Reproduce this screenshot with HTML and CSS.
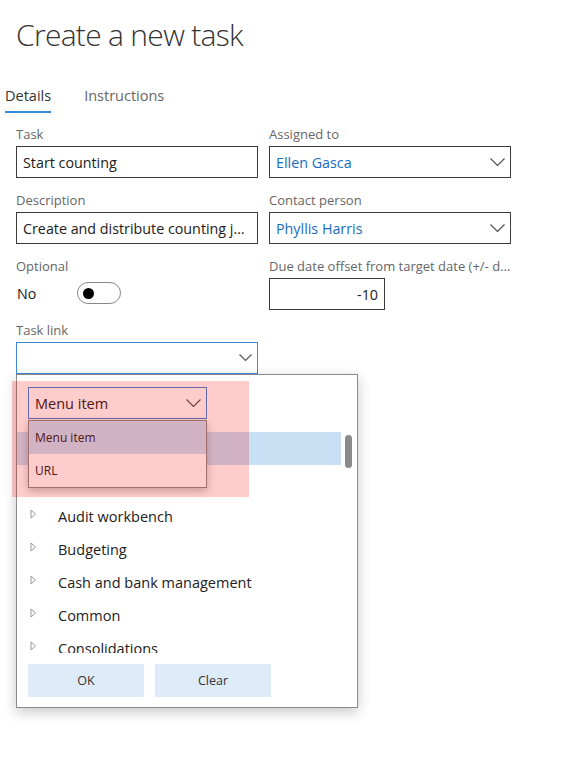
FILE: index.html
```html
<!DOCTYPE html>
<html lang="en">
<head>
  <meta charset="UTF-8">
  <title>Create a new task</title>
  <link rel="stylesheet" href="styles.css">
</head>
<body>

<h1 class="page-title">Create a new task</h1>

<div class="tabs">
  <div class="tab active">Details</div>
  <div class="tab">Instructions</div>
</div>

<div class="form">
  <div class="col">
    <div class="field">
      <div class="label">Task</div>
      <div class="control"><span class="value">Start counting</span></div>
    </div>
    <div class="field">
      <div class="label">Description</div>
      <div class="control"><span class="value">Create and distribute counting journals</span></div>
    </div>
    <div class="field">
      <div class="label">Optional</div>
      <div class="toggle-row">
        <span class="toggle-text">No</span>
        <span class="toggle"><span class="knob"></span></span>
      </div>
    </div>
    <div class="field tasklink">
      <div class="label">Task link</div>
      <div class="control select focused">
        <span class="value"></span>
        <svg class="chevron" width="13" height="8" viewBox="0 0 13 8"><path d="M0.5 0.5 L6.5 6.5 L12.5 0.5" /></svg>
      </div>

      <div class="popup">
        <div class="type-select">
          <div class="control select focused">
            <span class="value">Menu item</span>
            <svg class="chevron" width="15" height="8" viewBox="0 0 15 8"><path d="M0.5 0.5 L7.5 7.5 L14.5 0.5" /></svg>
          </div>
          <div class="options">
            <div class="option selected">Menu item</div>
            <div class="option">URL</div>
          </div>
        </div>

        <div class="tree">
          <div class="tree-row selected"></div>
          <div class="tree-row"></div>
          <div class="tree-row">
            <svg class="caret" width="7" height="10" viewBox="0 0 7 10"><path d="M1 1 L5.5 5 L1 9 Z" /></svg>
            <span>Audit workbench</span>
          </div>
          <div class="tree-row">
            <svg class="caret" width="7" height="10" viewBox="0 0 7 10"><path d="M1 1 L5.5 5 L1 9 Z" /></svg>
            <span>Budgeting</span>
          </div>
          <div class="tree-row">
            <svg class="caret" width="7" height="10" viewBox="0 0 7 10"><path d="M1 1 L5.5 5 L1 9 Z" /></svg>
            <span>Cash and bank management</span>
          </div>
          <div class="tree-row">
            <svg class="caret" width="7" height="10" viewBox="0 0 7 10"><path d="M1 1 L5.5 5 L1 9 Z" /></svg>
            <span>Common</span>
          </div>
          <div class="tree-row">
            <svg class="caret" width="7" height="10" viewBox="0 0 7 10"><path d="M1 1 L5.5 5 L1 9 Z" /></svg>
            <span>Consolidations</span>
          </div>
        </div>
        <div class="scroll-thumb"></div>

        <div class="buttons">
          <button class="btn">OK</button>
          <button class="btn">Clear</button>
        </div>
      </div>
    </div>
  </div>

  <div class="col">
    <div class="field">
      <div class="label">Assigned to</div>
      <div class="control select">
        <span class="value link">Ellen Gasca</span>
        <svg class="chevron" width="15" height="8" viewBox="0 0 15 8"><path d="M0.5 0.5 L7.5 7.5 L14.5 0.5" /></svg>
      </div>
    </div>
    <div class="field">
      <div class="label">Contact person</div>
      <div class="control select">
        <span class="value link">Phyllis Harris</span>
        <svg class="chevron" width="15" height="8" viewBox="0 0 15 8"><path d="M0.5 0.5 L7.5 7.5 L14.5 0.5" /></svg>
      </div>
    </div>
    <div class="field">
      <div class="label">Due date offset from target date (+/- days)</div>
      <div class="control number"><span class="value">-10</span></div>
    </div>
  </div>
</div>

<div class="mark"></div>

</body>
</html>
```

FILE: styles.css
```css
html {
  background: #fff;
}

body {
  margin: 0;
  min-height: 757px;
  color: #212121;
  font-family: "Open Sans", "Noto Sans", sans-serif;
  position: relative;
}

.page-title {
  margin: 0;
  padding: 14px 0 0 16px;
  font-size: 30px;
  line-height: 42px;
  letter-spacing: -0.7px;
  font-weight: 300;
  color: #333;
}

.tabs {
  display: flex;
  margin-top: 30px;
  padding-left: 5px;
}

.tab {
  font-size: 14.5px;
  line-height: 20px;
  padding-bottom: 5px;
  border-bottom: 2px solid transparent;
  margin-right: 33px;
  color: #666;
}

.tab.active {
  color: #333;
  border-bottom-color: #3a8fdd;
}

.form {
  display: grid;
  grid-template-columns: 242px 242px;
  column-gap: 11px;
  padding: 11px 0 0 16px;
}

.col {
  display: flex;
  flex-direction: column;
  gap: 12px;
}

.field {
  position: relative;
}

.label {
  font-size: 13px;
  line-height: 20px;
  margin-bottom: 2px;
  color: #666;
  white-space: nowrap;
  overflow: hidden;
  text-overflow: ellipsis;
}

.control {
  box-sizing: border-box;
  height: 32px;
  border: 1px solid #3b3b3b;
  display: flex;
  align-items: center;
  padding: 0 5px 0 6px;
  font-size: 14.3px;
  background: #fff;
}

.control .value {
  flex: 1;
  min-width: 0;
  white-space: nowrap;
  overflow: hidden;
  text-overflow: ellipsis;
}

.value.link {
  color: #1a6cbf;
}

.control.number {
  width: 116px;
  text-align: right;
  padding-right: 6px;
}

.control.focused {
  border-color: #3c87d6;
}

.chevron {
  flex: none;
}

.chevron path {
  fill: none;
  stroke: #555;
  stroke-width: 1.2;
}

.toggle-row {
  display: flex;
  align-items: center;
  height: 30px;
  padding-left: 1px;
  font-size: 14.3px;
}

.toggle-text {
  width: 60px;
}

.toggle {
  box-sizing: border-box;
  width: 44px;
  height: 22px;
  border: 1px solid #888;
  border-radius: 11px;
  display: flex;
  align-items: center;
  padding-left: 5px;
}

.knob {
  width: 11px;
  height: 11px;
  border-radius: 50%;
  background: #000;
}

/* task link picker */
.popup {
  position: absolute;
  top: 100%;
  left: 0;
  z-index: 5;
  width: 342px;
  box-sizing: border-box;
  border: 1px solid #8a8a8a;
  background: #fff;
  box-shadow: 0 4px 12px rgba(0, 0, 0, 0.22);
  padding-bottom: 10px;
}

.type-select {
  position: relative;
  z-index: 2;
  width: 179px;
  margin: 12px 0 0 11px;
}

.type-select .control {
  font-size: 14.5px;
}

.options {
  position: absolute;
  top: 100%;
  left: 0;
  right: 0;
  margin-top: 1px;
  border: 1px solid #8a8a8a;
  background: #fff;
  box-shadow: 0 3px 8px rgba(0, 0, 0, 0.25);
}

.option {
  height: 33px;
  line-height: 33px;
  padding-left: 6px;
  font-size: 12px;
}

.option.selected {
  background: #c7e0f4;
}

.tree {
  margin-top: 13px;
  height: 221px;
  width: 324px;
  overflow: hidden;
}

.tree-row {
  box-sizing: border-box;
  height: 33px;
  display: flex;
  align-items: center;
  padding: 3px 0 0 13px;
  font-size: 14.5px;
}

.tree-row.selected {
  background: #c7e0f4;
}

.caret {
  margin-right: 21px;
  margin-top: -5px;
}

.caret path {
  fill: none;
  stroke: #999;
  stroke-width: 1;
}

.scroll-thumb {
  position: absolute;
  top: 60px;
  right: 5px;
  width: 7px;
  height: 33px;
  border-radius: 4px;
  background: #8a8a8a;
}

.buttons {
  display: flex;
  gap: 11px;
  margin: 11px 0 0 11px;
}

.btn {
  width: 116px;
  height: 33px;
  border: none;
  background: #deecf9;
  font-family: inherit;
  font-size: 12.5px;
  color: #333;
}

.mark {
  position: absolute;
  left: 12px;
  top: 381px;
  width: 237px;
  height: 116px;
  background: rgba(255, 0, 0, 0.2);
  z-index: 10;
  pointer-events: none;
}
```
